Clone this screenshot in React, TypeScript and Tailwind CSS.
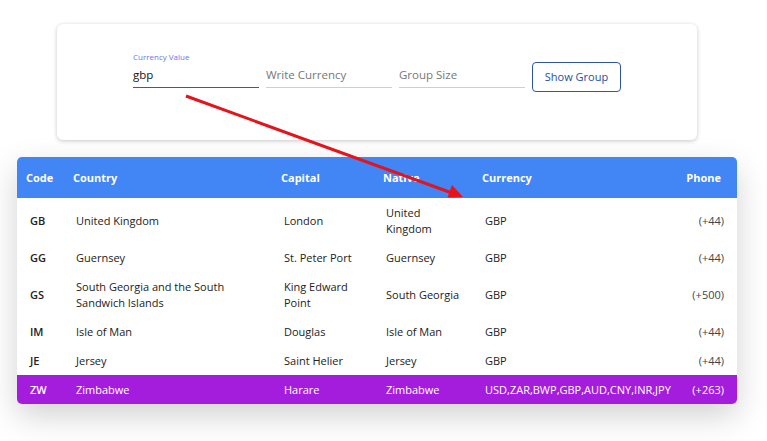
import { useState } from "react";

type Row = {
  code: string;
  country: string;
  capital: string;
  native: string;
  currency: string;
  phone: string;
};

const rows: Row[] = [
  { code: "GB", country: "United Kingdom", capital: "London", native: "United Kingdom", currency: "GBP", phone: "(+44)" },
  { code: "GG", country: "Guernsey", capital: "St. Peter Port", native: "Guernsey", currency: "GBP", phone: "(+44)" },
  { code: "GS", country: "South Georgia and the South Sandwich Islands", capital: "King Edward Point", native: "South Georgia", currency: "GBP", phone: "(+500)" },
  { code: "IM", country: "Isle of Man", capital: "Douglas", native: "Isle of Man", currency: "GBP", phone: "(+44)" },
  { code: "JE", country: "Jersey", capital: "Saint Helier", native: "Jersey", currency: "GBP", phone: "(+44)" },
  { code: "ZW", country: "Zimbabwe", capital: "Harare", native: "Zimbabwe", currency: "USD,ZAR,BWP,GBP,AUD,CNY,INR,JPY", phone: "(+263)" },
];

const Field = ({ label, placeholder, value, active }: { label?: string; placeholder: string; value?: string; active?: boolean }) => (
  <div className="flex w-[126px] flex-col">
    <span className="h-[12px] text-[8px] leading-[12px] text-[#6f73ee]">{label}</span>
    <div
      className={`flex h-[25px] items-center border-b text-[11.5px] ${
        active ? "border-[#2f5cb8] text-[#111]" : "border-[#cfcfcf] text-[#777]"
      }`}
    >
      {value ?? placeholder}
    </div>
  </div>
);

const SearchCard = () => (
  <div className="ml-[57px] flex h-[116px] w-[640px] justify-center rounded-md bg-white pt-[27px] shadow-[0_1px_4px_rgba(0,0,0,0.22)]">
    <div className="flex h-[66px] items-start gap-[7px]">
      <Field label="Currency Value" placeholder="" value="gbp" active />
      <Field placeholder="Write Currency" />
      <Field placeholder="Group Size" />
      <button className="mt-[11px] h-[30px] w-[89px] rounded border border-[#2f55a6] text-[11px] font-medium text-[#2650a2]">
        Show Group
      </button>
    </div>
  </div>
);

const CountryTable = () => (
  <div className="ml-[17px] w-[720px] overflow-hidden rounded-[5px] bg-white shadow-[0_12px_32px_rgba(0,0,0,0.18)]">
    <table className="w-full table-fixed border-collapse text-[11px] leading-[16px]">
      <colgroup>
        <col className="w-[47px]" />
        <col className="w-[208px]" />
        <col className="w-[102px]" />
        <col className="w-[99px]" />
        <col className="w-[204px]" />
        <col />
      </colgroup>
      <thead>
        <tr className="h-[41px] bg-[#4285f4] text-left font-bold text-white">
          <th className="pl-[9px]">Code</th>
          <th className="pl-[9px]">Country</th>
          <th className="pl-[9px]">Capital</th>
          <th className="pl-[9px]">Native</th>
          <th className="pl-[9px]">Currency</th>
          <th className="pr-[16px] text-right">Phone</th>
        </tr>
      </thead>
      <tbody>
        {rows.map((r) => {
          const selected = r.code === "ZW";
          return (
            <tr key={r.code} className={selected ? "bg-[#a51ddc] text-white" : "text-[#222]"}>
              <td className="py-[6.5px] pl-[13px] font-semibold">{r.code}</td>
              <td className="py-[6.5px] pl-[12px] pr-[40px]">{r.country}</td>
              <td className="py-[6.5px] pl-[12px] pr-[14px]">{r.capital}</td>
              <td className="py-[6.5px] pl-[12px] pr-[10px]">{r.native}</td>
              <td className="whitespace-nowrap py-[6.5px] pl-[12px]">{r.currency}</td>
              <td className={`py-[6.5px] pr-[13px] text-right ${selected ? "" : "text-[#444]"}`}>{r.phone}</td>
            </tr>
          );
        })}
      </tbody>
    </table>
  </div>
);

export default function App() {
  const [, setTick] = useState(0);
  return (
    <div
      className="relative h-[441px] w-[767px] overflow-hidden bg-white pt-[24px]"
      style={{ fontFamily: '"Open Sans", "Noto Sans", sans-serif' }}
      onClick={() => setTick((t) => t + 1)}
    >
      <SearchCard />
      <div className="h-[17px]" />
      <CountryTable />
      {/* annotation arrow drawn over the page */}
      <svg className="pointer-events-none absolute left-0 top-0" width="767" height="441" viewBox="0 0 767 441">
        <line x1="186" y1="96" x2="452" y2="193" stroke="#e3141c" strokeWidth="3" />
        <polygon points="463,197 447.5,197.5 452,185" fill="#e3141c" />
      </svg>
    </div>
  );
}
